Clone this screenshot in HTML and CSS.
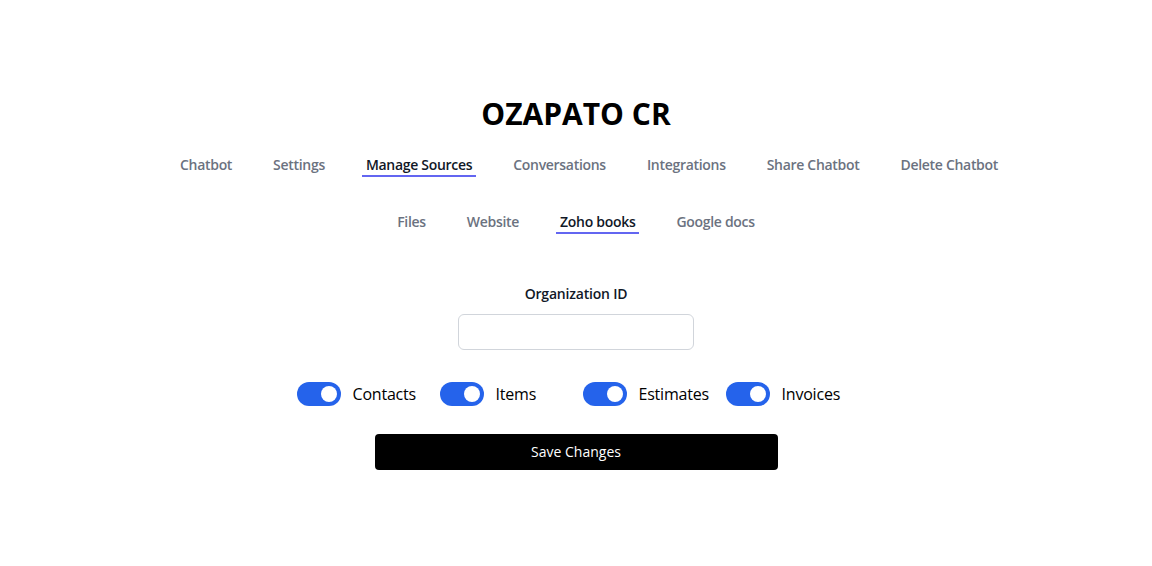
FILE: index.html
```html
<!DOCTYPE html>
<html lang="en">
<head>
    <meta charset="UTF-8">
    <meta name="viewport" content="width=device-width, initial-scale=1.0">
    <title>OZAPATO CR</title>
    <link rel="stylesheet" href="styles.css">
</head>
<body>
    <div class="page">
        <h1 class="title">OZAPATO CR</h1>

        <nav class="tabs main-tabs">
            <a class="tab">Chatbot</a>
            <a class="tab">Settings</a>
            <a class="tab active">Manage Sources</a>
            <a class="tab">Conversations</a>
            <a class="tab">Integrations</a>
            <a class="tab">Share Chatbot</a>
            <a class="tab">Delete Chatbot</a>
        </nav>

        <nav class="tabs sub-tabs">
            <a class="tab">Files</a>
            <a class="tab">Website</a>
            <a class="tab active">Zoho books</a>
            <a class="tab">Google docs</a>
        </nav>

        <form class="source-form">
            <label class="field-label" for="orgId">Organization ID</label>
            <input class="field-input" id="orgId" type="text">

            <div class="toggles">
                <label class="toggle-item">
                    <span class="switch"><span class="knob"></span></span>
                    <span class="toggle-text">Contacts</span>
                </label>
                <label class="toggle-item">
                    <span class="switch"><span class="knob"></span></span>
                    <span class="toggle-text">Items</span>
                </label>
                <label class="toggle-item">
                    <span class="switch"><span class="knob"></span></span>
                    <span class="toggle-text">Estimates</span>
                </label>
                <label class="toggle-item">
                    <span class="switch"><span class="knob"></span></span>
                    <span class="toggle-text">Invoices</span>
                </label>
            </div>

            <button class="save-btn" type="button">Save Changes</button>
        </form>
    </div>
</body>
</html>
```

FILE: styles.css
```css
* {
    box-sizing: border-box;
}
body {
    margin: 0;
    font-family: "Open Sans", "Noto Sans", Arial, sans-serif;
    background-color: #ffffff;
    color: #000000;
}
.page {
    padding-top: 96px;
    display: flex;
    flex-direction: column;
    align-items: center;
}
.title {
    margin: 0;
    font-size: 30px;
    line-height: 36px;
    font-weight: 700;
    color: #000000;
}
.tabs {
    margin-top: 23px;
    display: flex;
    justify-content: center;
    gap: 33px;
}
.main-tabs {
    padding-left: 26px;
}
.sub-tabs {
    margin-top: 35px;
}
.tab {
    padding: 0 4px;
    font-size: 14px;
    line-height: 20px;
    font-weight: 600;
    letter-spacing: -0.3px;
    color: #6b7280;
    border-bottom: 2px solid transparent;
    cursor: pointer;
}
.tab.active {
    color: #111827;
    border-bottom-color: #6366f1;
}
.source-form {
    margin-top: 50px;
    display: flex;
    flex-direction: column;
    align-items: center;
}
.field-label {
    font-size: 14px;
    line-height: 20px;
    font-weight: 600;
    letter-spacing: -0.2px;
    color: #111827;
}
.field-input {
    margin-top: 10px;
    width: 236px;
    height: 36px;
    border: 1px solid #d1d5db;
    border-radius: 6px;
    padding: 0 10px;
    font-family: inherit;
    font-size: 14px;
}
.toggles {
    margin-top: 32px;
    margin-right: 2px;
    display: grid;
    grid-template-columns: repeat(4, 128px);
    column-gap: 15px;
}
.toggle-item {
    display: flex;
    align-items: center;
    cursor: pointer;
}
.switch {
    width: 44px;
    height: 24px;
    border-radius: 12px;
    background-color: #2563eb;
    display: flex;
    align-items: center;
    justify-content: flex-end;
    padding: 0 4px;
    flex-shrink: 0;
}
.knob {
    width: 16px;
    height: 16px;
    border-radius: 50%;
    background-color: #ffffff;
}
.toggle-text {
    margin-left: 12px;
    font-size: 16px;
    line-height: 24px;
    letter-spacing: -0.2px;
    color: #000000;
}
.save-btn {
    margin-top: 28px;
    width: 403px;
    height: 36px;
    border: none;
    border-radius: 4px;
    background-color: #000000;
    color: #ffffff;
    font-family: inherit;
    font-size: 14px;
    line-height: 20px;
    cursor: pointer;
}
```
